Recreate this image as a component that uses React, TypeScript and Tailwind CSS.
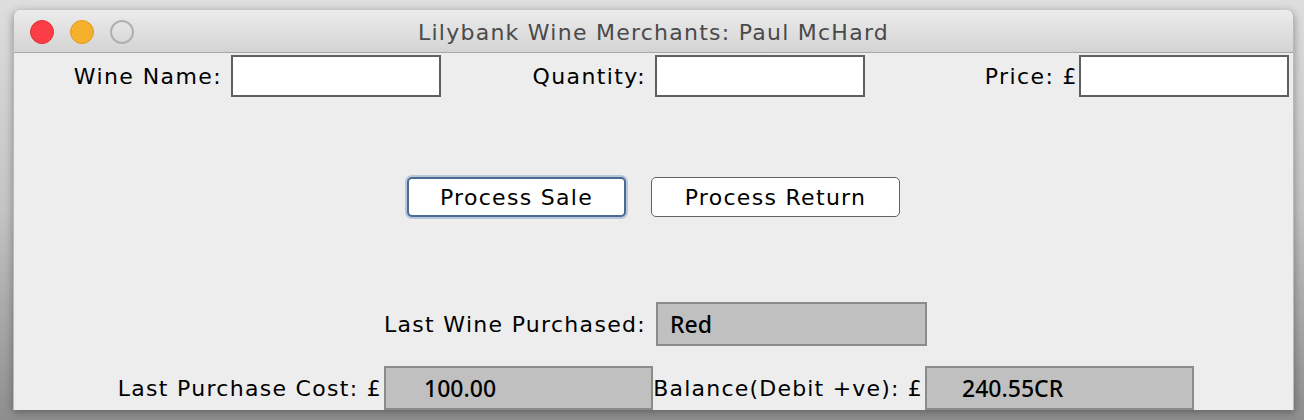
import React from "react";

const font = "font-['DejaVu_Sans',sans-serif]";

const TrafficLights = () => (
  <div className="flex items-center gap-[16px] pl-[16px] pt-[2px]">
    <span className="block w-[24px] h-[24px] rounded-full bg-[#fc3d45] border border-[#de2e36]" />
    <span className="block w-[24px] h-[24px] rounded-full bg-[#f5b12c] border border-[#dc9a1c]" />
    <span className="block w-[24px] h-[24px] rounded-full border-2 border-[#b0b0b0]" />
  </div>
);

const InputField = () => (
  <div className="w-[210px] h-[42px] bg-white border-2 border-[#5f5f5f]" />
);

const ValueField = ({ value, inset, width }: { value: string; inset: string; width: string }) => (
  <div
    className={`${width} h-[44px] shrink-0 bg-[#c0c0c0] border-2 border-[#8b8b8b] flex items-center ${inset} text-[23px] tracking-normal text-black font-medium font-['Noto_Sans',sans-serif]`}
  >
    {value}
  </div>
);

export default function App() {
  return (
    <div className={`w-[1304px] h-[420px] overflow-hidden bg-gradient-to-b from-[#dedede] via-[#c4c4c4] to-[#8e8e8e] pl-[13px] pt-[10px] ${font}`}>
      <div className="w-[1281px] h-[400px] flex flex-col rounded-t-[7px] overflow-hidden bg-[#ededed] border-x border-[#b9b9b9] shadow-[0_2px_8px_rgba(0,0,0,0.35)]">
        {/* title bar */}
        <div className="relative h-[43px] shrink-0 flex items-center bg-gradient-to-b from-[#ececec] to-[#d4d4d4] border-b border-[#a7a7a7]">
          <TrafficLights />
          <div className="absolute inset-0 flex items-center justify-center pt-[3px] text-[22px] tracking-[1.25px] text-[#4a4a4a]">
            Lilybank Wine Merchants: Paul McHard
          </div>
        </div>

        {/* entry row */}
        <div className="flex pt-[2px] text-[22px] tracking-[1.4px] text-black">
          <div className="w-[427px] flex items-center justify-end gap-[9px]">
            <span>Wine Name:</span>
            <InputField />
          </div>
          <div className="w-[424px] flex items-center justify-end gap-[9px]">
            <span>Quantity:</span>
            <InputField />
          </div>
          <div className="w-[424px] flex items-center justify-end gap-[1px]">
            <span>Price: £</span>
            <InputField />
          </div>
        </div>

        {/* buttons */}
        <div className="flex justify-center gap-[25px] mt-[80px] text-[22px] tracking-[1.3px] text-black">
          <button className="w-[219px] h-[40px] bg-white rounded-[5px] border-2 border-[#4a6a92] shadow-[0_0_0_2px_rgba(120,155,200,0.45)]">
            Process Sale
          </button>
          <button className="w-[249px] h-[40px] bg-white rounded-[5px] border-[1.5px] border-[#626262]">
            Process Return
          </button>
        </div>

        {/* last wine */}
        <div className="flex justify-center items-center gap-[10px] mt-[85px] pl-[4px] text-[22px] tracking-[1.3px] text-black">
          <span>Last Wine Purchased:</span>
          <ValueField value="Red" inset="pl-[12px]" width="w-[271px]" />
        </div>

        {/* cost / balance */}
        <div className="flex justify-center items-center mt-[20px] pl-[2px] text-[22px] text-black whitespace-nowrap">
          <span className="w-[269px] shrink-0 flex justify-end pr-[2px] tracking-[1.3px]">Last Purchase Cost: £</span>
          <ValueField value="100.00" inset="pl-[38px]" width="w-[269px]" />
          <span className="w-[272px] shrink-0 flex justify-end pr-[2px] tracking-[1.2px]">Balance(Debit +ve): £</span>
          <ValueField value="240.55CR" inset="pl-[35px]" width="w-[269px]" />
        </div>
      </div>
    </div>
  );
}
